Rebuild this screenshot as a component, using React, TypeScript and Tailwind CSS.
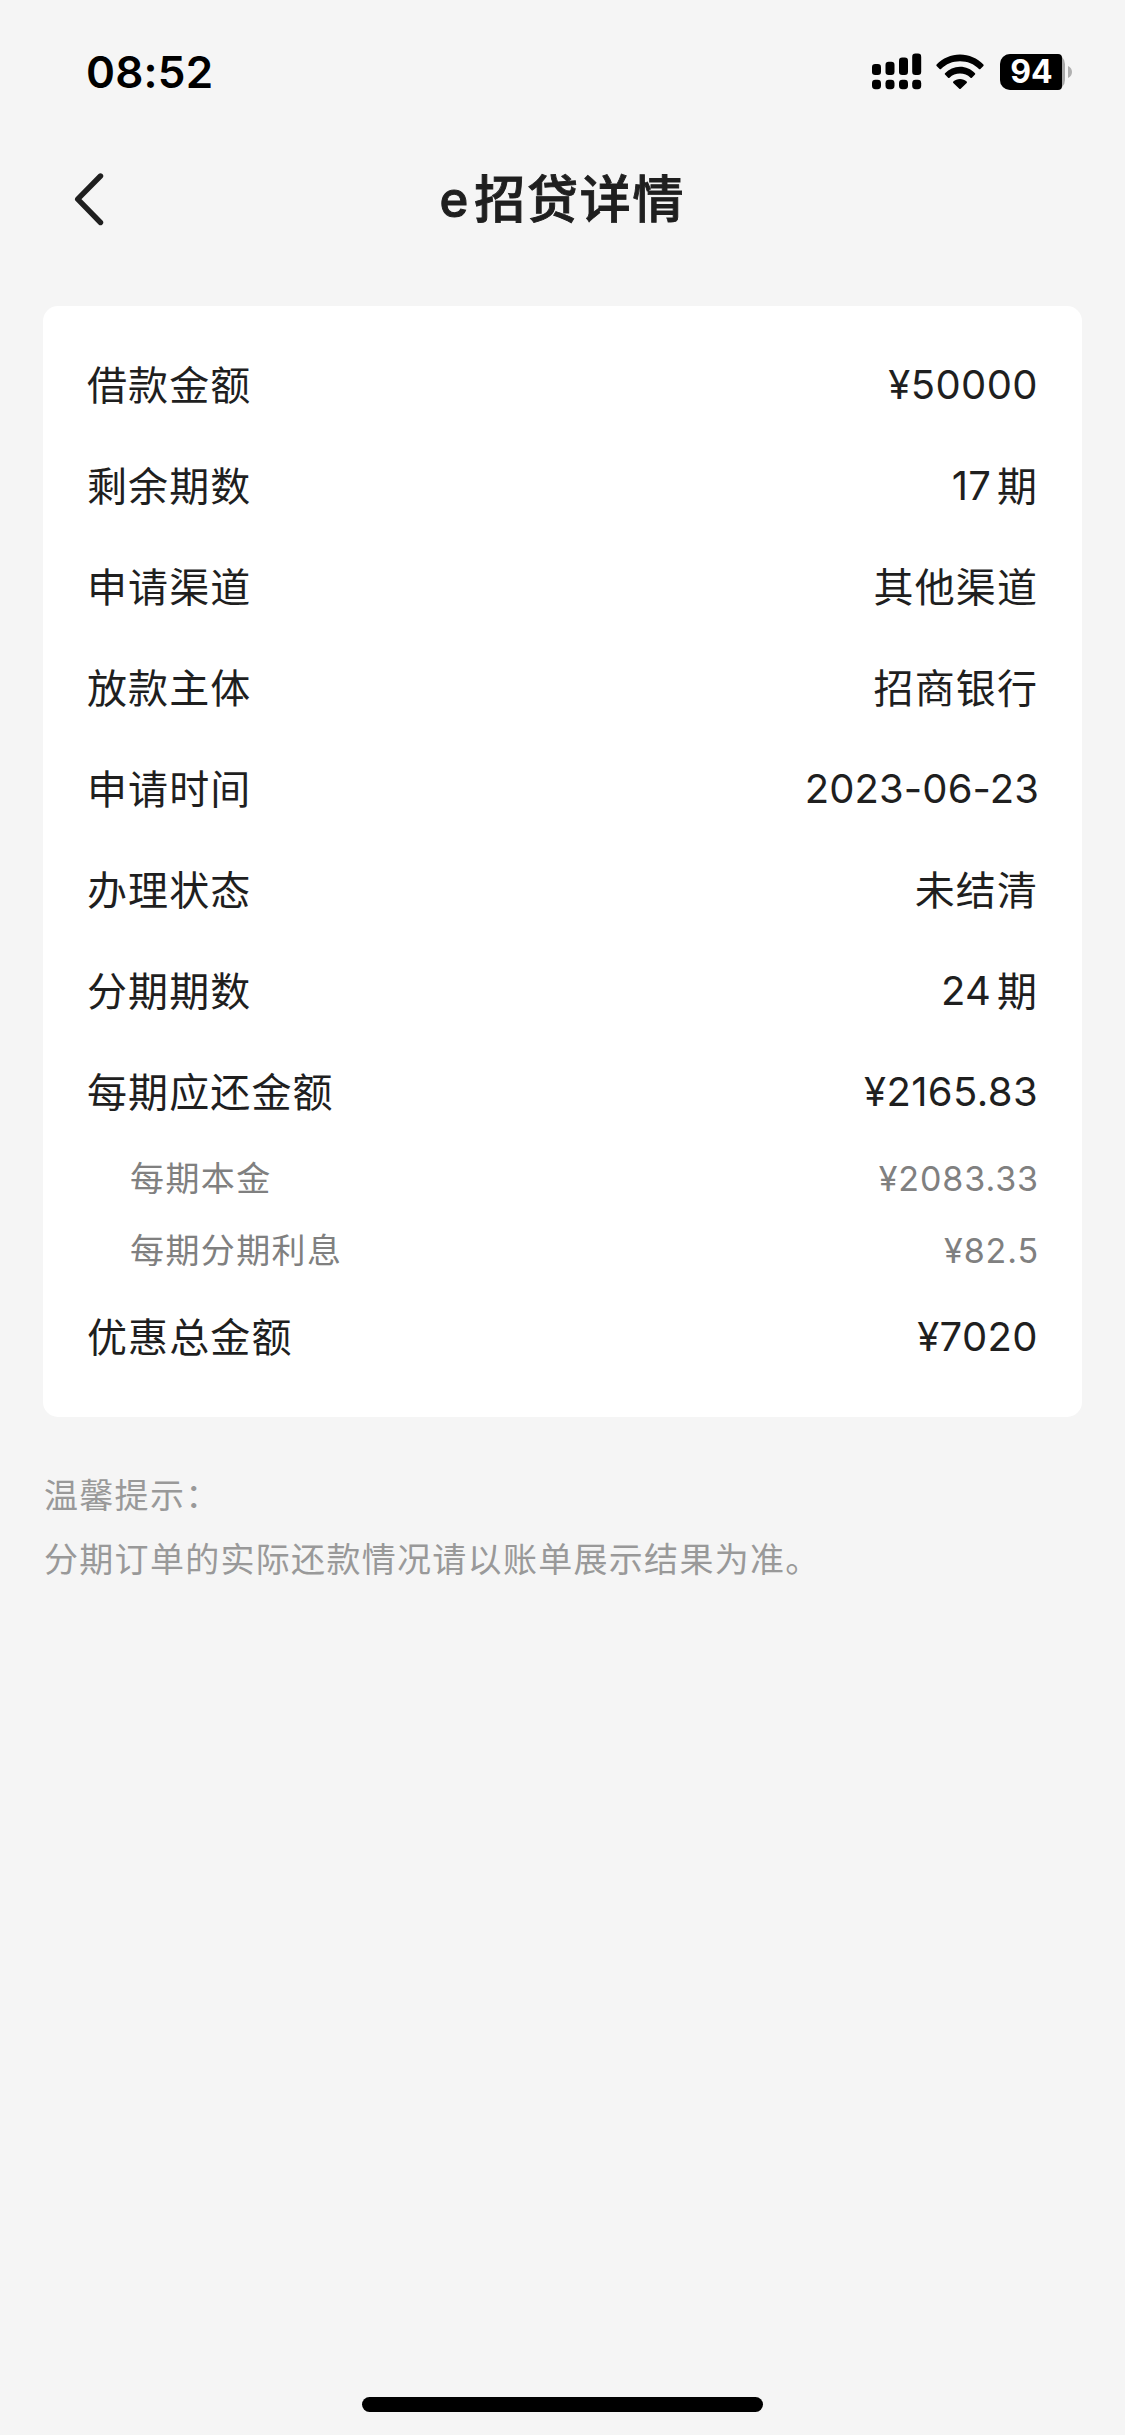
type Item = { label: string; value?: string; unit?: string; sub?: boolean };

const items: Item[] = [
  { label: "借款金额", value: "¥50000" },
  { label: "剩余期数", value: "17", unit: "期" },
  { label: "申请渠道", unit: "其他渠道" },
  { label: "放款主体", unit: "招商银行" },
  { label: "申请时间", value: "2023-06-23" },
  { label: "办理状态", unit: "未结清" },
  { label: "分期期数", value: "24", unit: "期" },
  { label: "每期应还金额", value: "¥2165.83" },
  { label: "每期本金", value: "¥2083.33", sub: true },
  { label: "每期分期利息", value: "¥82.5", sub: true },
  { label: "优惠总金额", value: "¥7020" },
];

function Signal() {
  return (
    <svg width="50" height="37" viewBox="0 0 50 37" fill="#000">
      <rect x="0" y="11" width="9" height="11" rx="3.2" />
      <rect x="13.5" y="8.7" width="9" height="13.3" rx="3.2" />
      <rect x="27" y="4.5" width="9" height="17.5" rx="3.2" />
      <rect x="40.2" y="0.6" width="9" height="21.4" rx="3.2" />
      <rect x="0" y="26.8" width="9" height="9.4" rx="3.4" />
      <rect x="13.5" y="26.8" width="9" height="9.4" rx="3.4" />
      <rect x="27" y="26.8" width="9" height="9.4" rx="3.4" />
      <rect x="40.2" y="26.8" width="9" height="9.4" rx="3.4" />
    </svg>
  );
}

function Wifi() {
  return (
    <svg width="48" height="36" viewBox="0 0 48 36" fill="#000">
      <path d="M0.6 10.6C6.8 4.2 14.9.5 24 .5s17.2 3.7 23.4 10.1c.4.4.4 1 0 1.4l-3 3c-.4.4-1 .4-1.400 0C38 10 31.300 7.300 24 7.300S10 10 5 15c-.4.4-1 .4-1.400 0l-3-3c-.4-.4-.4-1 0-1.400z" />
      <path d="M9 19.200C13 15.100 18.200 12.800 24 12.800s11 2.300 15 6.400c.4.4.4 1 0 1.400l-3.100 3.100c-.4.4-1 .4-1.400 0C31.600 21 28 19.600 24 19.600s-7.600 1.400-10.500 4.100c-.4.4-1 .4-1.400 0L9 20.600c-.4-.4-.4-1 0-1.400z" />
      <path d="M17.300 27.500c1.800-1.600 4.100-2.500 6.700-2.500s4.900.9 6.700 2.500c.4.4.4 1 0 1.400l-6 5.900c-.4.4-1 .4-1.400 0l-6-5.900c-.4-.4-.4-1 0-1.400z" />
    </svg>
  );
}

function Battery() {
  return (
    <div className="flex items-center gap-[3px]">
      <div className="flex h-9 w-[65px] rounded-[10px] bg-[#a9a9a9]">
        <div className="flex w-[62px] items-center justify-center rounded-l-[10px] rounded-r-[4px] bg-black pl-px text-[32px] leading-9 font-bold text-white">
          94
        </div>
      </div>
      <svg width="4" height="12" viewBox="0 0 4 12" fill="#b0b0b0">
        <path d="M0 0c2.400 1 4 3.200 4 6s-1.600 5-4 6z" />
      </svg>
    </div>
  );
}

function Row({ label, value, unit, sub }: Item) {
  return (
    <div
      className={
        sub
          ? "flex h-[72px] items-center justify-between pl-[44px] text-[34px] tracking-[1.4px] text-[#808080]"
          : "flex h-[101px] items-center justify-between pl-px text-[40px] tracking-[1.1px] text-[#1f1f1f]"
      }
    >
      <span className={sub ? "" : "pt-px"}>{label}</span>
      <span className="flex items-center gap-[6px]">
        {value && (
          <span
            className={
              sub ? "tracking-[0.9px]" : value.startsWith("¥") ? "mr-px tracking-[0.4px]" : "tracking-[0.1px]"
            }
          >
            {value}
          </span>
        )}
        {unit && <span className="mr-px pt-px">{unit}</span>}
      </span>
    </div>
  );
}

export default function App() {
  return (
    <div className="flex h-[2435px] w-[1125px] flex-col bg-[#f5f5f5] font-['Inter','Noto_Sans_CJK_SC',sans-serif]">
      <header className="flex h-[143px] items-center justify-between pr-[53px] pl-[86px]">
        <span className="text-[44px] font-semibold tracking-[0.2px] text-black">08:52</span>
        <div className="flex items-center">
          <Signal />
          <div className="ml-[14px]">
            <Wifi />
          </div>
          <div className="ml-4">
            <Battery />
          </div>
        </div>
      </header>
      <nav className="grid h-[114px] grid-cols-[1fr_auto_1fr] items-center px-[73px]">
        <svg className="mb-[3px]" width="32" height="54" viewBox="0 0 32 54" fill="none" stroke="#1f1f1f" strokeWidth="5.4" strokeLinecap="round" strokeLinejoin="round">
          <path d="M27.500 4 4.700 27.200 27.500 50.500" />
        </svg>
        <h1 className="flex items-center text-[51px] font-medium tracking-[1.8px] text-[#1f1f1f]">
          <span className="mr-[4px] text-[49px] [-webkit-text-stroke:1px_#1f1f1f]">e</span>
          <span className="[-webkit-text-stroke:0.9px_#1f1f1f]">招贷详情</span>
        </h1>
      </nav>
      <main className="mx-[43px] mt-[48.5px] rounded-[15px] bg-white px-[43px] py-[29px]">
        {items.map((item) => (
          <Row key={item.label} {...item} />
        ))}
      </main>
      <section className="mt-[47px] ml-[44px] text-[34px] leading-[64px] tracking-[1.3px] text-[#999]">
        <p>温馨提示：</p>
        <p>分期订单的实际还款情况请以账单展示结果为准。</p>
      </section>
      <footer className="mt-auto flex justify-center pb-[23px]">
        <div className="h-[15px] w-[401px] rounded-full bg-black" />
      </footer>
    </div>
  );
}
